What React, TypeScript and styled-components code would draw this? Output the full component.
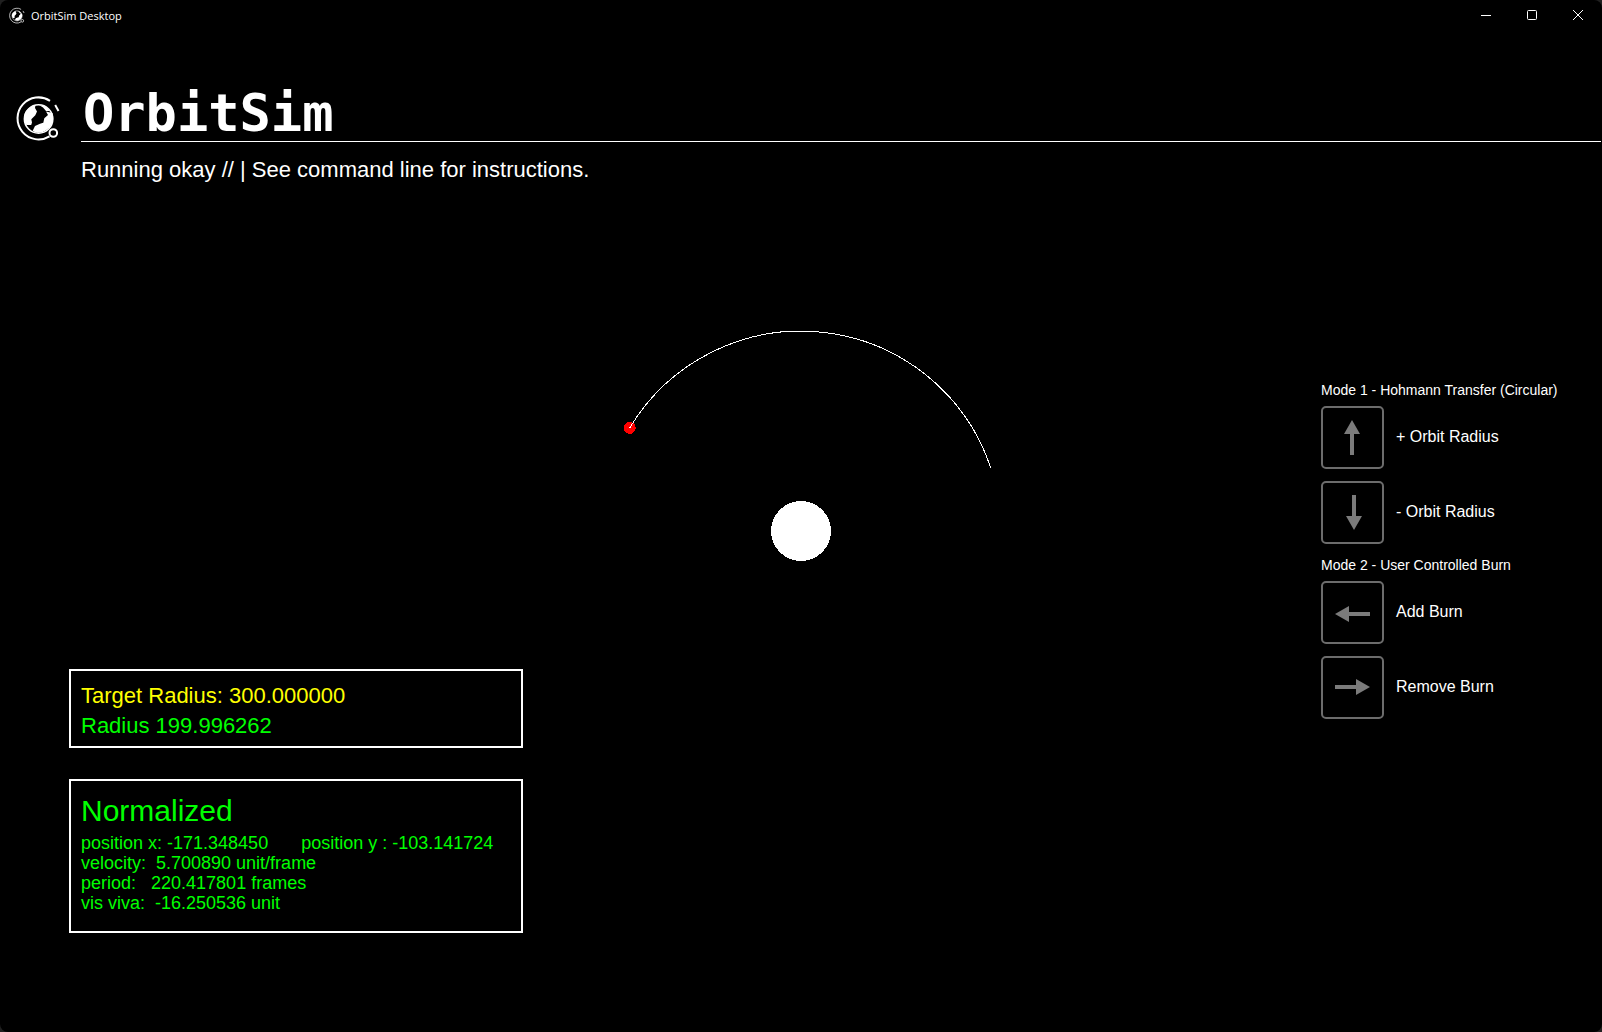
import React from "react";
import styled, { createGlobalStyle } from "styled-components";

const GlobalStyle = createGlobalStyle`
  *, *::before, *::after { box-sizing: border-box; }
  body { margin: 0; background: #202020; }
  h1, h2, p { margin: 0; font-weight: 400; }
  svg { display: block; }
`;

const Window = styled.div`
  display: flex;
  flex-direction: column;
  min-height: 100vh;
  border-radius: 8px;
  overflow: hidden;
  background: #000;
  color: #fff;
  font-family: "Liberation Sans", Arial, sans-serif;
`;

const TitleBar = styled.header`
  display: flex;
  align-items: center;
  height: 31px;
  padding: 0 1px 0 8px;
  gap: 6px;
`;

const WindowTitle = styled.span`
  flex: 1;
  font: 11px/16px "Open Sans", "Noto Sans", sans-serif;
`;

const CaptionButtons = styled.div`
  align-self: flex-start;
  display: flex;
`;

const CaptionButton = styled.button`
  display: grid;
  place-items: center;
  width: 46px;
  height: 30px;
  padding: 0;
  border: 0;
  background: transparent;
  color: #fff;
`;

const Viewport = styled.main`
  flex: 1;
  display: grid;
  padding: 0 1px 1px;
`;

const Scene = styled.svg`
  grid-area: 1 / 1;
  place-self: center;
`;

const Hud = styled.div`
  grid-area: 1 / 1;
  z-index: 1;
  display: flex;
  flex-direction: column;
  padding-top: 54px;
`;

const Banner = styled.div`
  display: grid;
  grid-template-columns: 80px 1fr;
`;

const LogoCell = styled.div`
  padding: 9px 0 0 12px;
`;

const AppName = styled.h1`
  border-bottom: 1px solid #fff;
  padding-left: 2px;
  font: 700 52px/56px "DejaVu Sans Mono", monospace;
`;

const Status = styled.p`
  grid-column: 2;
  padding-top: 16px;
  font-size: 22px;
  line-height: 24px;
`;

const Body = styled.div`
  flex: 1;
  display: flex;
  justify-content: space-between;
`;

const Readouts = styled.div`
  align-self: flex-end;
  display: flex;
  flex-direction: column;
  gap: 31px;
  width: 454px;
  margin: 0 0 98px 68px;
`;

const Panel = styled.section<{ $pad: string }>`
  border: 2px solid #fff;
  padding: ${(p) => p.$pad};
  color: #0f0;
`;

const RadiusLine = styled.p<{ $target?: boolean }>`
  font-size: 22px;
  line-height: 30px;
  color: ${(p) => (p.$target ? "#ff0" : "#0f0")};
`;

const PanelTitle = styled.h2`
  margin-bottom: 5px;
  font-size: 30px;
  line-height: 34px;
`;

const DataLine = styled.p`
  display: flex;
  gap: 33px;
  font-size: 18px;
  line-height: 20px;
  white-space: pre;
`;

const Controls = styled.aside`
  display: flex;
  flex-direction: column;
  gap: 13px;
  width: 280px;
  margin-top: 200px;
`;

const Mode = styled.section`
  display: grid;
  gap: 12px;
`;

const ModeTitle = styled.h2`
  margin-bottom: -4px;
  font-size: 14px;
  line-height: 16px;
`;

const KeyRow = styled.div`
  display: flex;
  align-items: center;
  gap: 12px;
`;

const KeyButton = styled.button`
  width: 63px;
  height: 63px;
  padding: 0;
  border: 2px solid #6c6c6c;
  border-radius: 5px;
  background: transparent;
  color: #7b7b7b;
`;

const KeyLabel = styled.label`
  padding-bottom: 2px;
  font-size: 16px;
  line-height: 18px;
`;

const ARROWS = {
  up: "M31 14 39 28H33V49H29V28H23Z",
  down: "M31 14H35V35H41L33 49 25 35H31Z",
  left: "M14 33 28 25V31H49V35H28V41Z",
  right: "M14 29H35V23L49 31 35 39V33H14Z",
};

type Direction = keyof typeof ARROWS;

const MODES: { title: string; keys: { dir: Direction; label: string }[] }[] = [
  {
    title: "Mode 1 - Hohmann Transfer (Circular)",
    keys: [
      { dir: "up", label: "+ Orbit Radius" },
      { dir: "down", label: "- Orbit Radius" },
    ],
  },
  {
    title: "Mode 2 - User Controlled Burn",
    keys: [
      { dir: "left", label: "Add Burn" },
      { dir: "right", label: "Remove Burn" },
    ],
  },
];

function Logo({ size }: { size: number }) {
  return (
    <svg width={size} height={size} viewBox="0 0 48 48" fill="none" aria-hidden="true">
      <g stroke="#fff" strokeWidth="2">
        <path d="M37 6.800A21 21 0 1 0 36.500 42.300" />
        <path d="M42.200 11 45.500 17" />
        <circle cx="40.300" cy="39" r="3.800" />
        <circle cx="25.600" cy="25" r="14.200" strokeWidth="1.600" />
      </g>
      <path
        fill="#fff"
        d="M22.500 11C15 13 11 18 11 23.500 11 27 12 29.500 13.500 31H18.200L19 28.500 18.300 25.300 22.300 21.300 24 17.500 22 14ZM33 17.500 39.500 19C41.500 26 39 31.500 35.300 34.500 31 38.500 25 40.500 19.700 36.700L22 32 27 29.800 30.300 28.700 31.300 24.300 35 21ZM26 11 33 12.500 37 17H33L30 13.500Z"
      />
    </svg>
  );
}

function OrbitScene() {
  return (
    <Scene width="420" height="420" viewBox="-210 -210 420 420" role="img" aria-label="Orbit trail">
      <g shapeRendering="crispEdges">
        <circle r="30" fill="#fff" />
        <circle cx="-171.3" cy="-103.1" r="6" fill="#f00" />
        <path d="M-171.3 -103.1A200 200 0 0 1 189.7 -63.3" fill="none" stroke="#fff" />
      </g>
    </Scene>
  );
}

export default function App() {
  return (
    <>
      <GlobalStyle />
      <Window>
        <TitleBar>
          <Logo size={17} />
          <WindowTitle>OrbitSim Desktop</WindowTitle>
          <CaptionButtons>
            <CaptionButton aria-label="Minimize">
              <svg width="10" height="10" shapeRendering="crispEdges">
                <path d="M0 5.5H10" stroke="currentColor" />
              </svg>
            </CaptionButton>
            <CaptionButton aria-label="Maximize">
              <svg width="10" height="10">
                <rect x=".5" y=".5" width="9" height="9" rx="1" fill="none" stroke="currentColor" />
              </svg>
            </CaptionButton>
            <CaptionButton aria-label="Close">
              <svg width="10" height="10">
                <path d="M0 0 10 10M10 0 0 10" stroke="currentColor" />
              </svg>
            </CaptionButton>
          </CaptionButtons>
        </TitleBar>

        <Viewport>
          <OrbitScene />
          <Hud>
            <Banner>
              <LogoCell>
                <Logo size={48} />
              </LogoCell>
              <AppName>OrbitSim</AppName>
              <Status>Running okay // | See command line for instructions.</Status>
            </Banner>

            <Body>
              <Readouts>
                <Panel $pad="10px 10px 5px">
                  <RadiusLine $target>Target Radius: 300.000000</RadiusLine>
                  <RadiusLine>Radius 199.996262</RadiusLine>
                </Panel>
                <Panel $pad="13px 10px 18px">
                  <PanelTitle>Normalized</PanelTitle>
                  <DataLine>
                    <span>position x: -171.348450</span>
                    <span>position y : -103.141724</span>
                  </DataLine>
                  <DataLine>{"velocity:  5.700890 unit/frame"}</DataLine>
                  <DataLine>{"period:   220.417801 frames"}</DataLine>
                  <DataLine>{"vis viva:  -16.250536 unit"}</DataLine>
                </Panel>
              </Readouts>

              <Controls>
                {MODES.map((mode) => (
                  <Mode key={mode.title}>
                    <ModeTitle>{mode.title}</ModeTitle>
                    {mode.keys.map(({ dir, label }) => (
                      <KeyRow key={dir}>
                        <KeyButton id={`key-${dir}`}>
                          <svg width="59" height="59" viewBox="2 2 59 59" aria-hidden="true">
                            <path d={ARROWS[dir]} fill="currentColor" />
                          </svg>
                        </KeyButton>
                        <KeyLabel htmlFor={`key-${dir}`}>{label}</KeyLabel>
                      </KeyRow>
                    ))}
                  </Mode>
                ))}
              </Controls>
            </Body>
          </Hud>
        </Viewport>
      </Window>
    </>
  );
}
